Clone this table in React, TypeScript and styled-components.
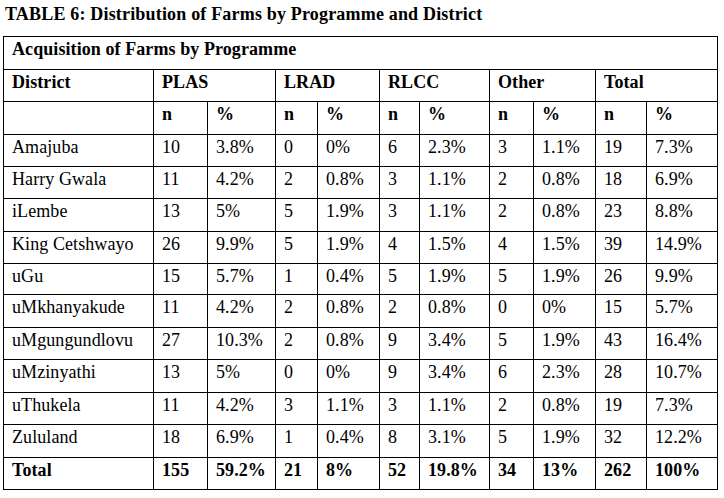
import React from "react";
import styled, { createGlobalStyle } from "styled-components";

const Global = createGlobalStyle`
  html, body { margin: 0; padding: 0; background: #fff; }
  body { font-family: "Liberation Serif", "Times New Roman", serif; color: #000; }
`;

const Page = styled.div`
  padding: 4px 0 0 3px;
  width: 724px;
  box-sizing: border-box;
`;

const Caption = styled.div`
  font-weight: bold;
  font-size: 18px;
  letter-spacing: 0.18px;
  line-height: 21px;
  padding-left: 2px;
  height: 32px;
`;

const Table = styled.table`
  border-collapse: collapse;
  table-layout: fixed;
  width: 714px;
  font-size: 18px;
`;

const Row = styled.tr<{ $h: number }>`
  height: ${(p) => p.$h}px;
`;

const Cell = styled.td<{ $bold?: boolean }>`
  border: 1px solid #000;
  padding: 2px 4px 0 8px;
  vertical-align: top;
  text-align: left;
  line-height: 21px;
  letter-spacing: 0.08px;
  font-weight: ${(p) => (p.$bold ? "bold" : "normal")};
  white-space: nowrap;
  overflow: hidden;
`;

const widths = [150, 54, 68, 42, 62, 40, 70, 44, 62, 51, 71];
const heights = [33, 32, 33, 32, 32, 33, 32, 31, 33, 32, 33, 32, 33, 32];

const data: string[][] = [
  ["Amajuba", "10", "3.8%", "0", "0%", "6", "2.3%", "3", "1.1%", "19", "7.3%"],
  ["Harry Gwala", "11", "4.2%", "2", "0.8%", "3", "1.1%", "2", "0.8%", "18", "6.9%"],
  ["iLembe", "13", "5%", "5", "1.9%", "3", "1.1%", "2", "0.8%", "23", "8.8%"],
  ["King Cetshwayo", "26", "9.9%", "5", "1.9%", "4", "1.5%", "4", "1.5%", "39", "14.9%"],
  ["uGu", "15", "5.7%", "1", "0.4%", "5", "1.9%", "5", "1.9%", "26", "9.9%"],
  ["uMkhanyakude", "11", "4.2%", "2", "0.8%", "2", "0.8%", "0", "0%", "15", "5.7%"],
  ["uMgungundlovu", "27", "10.3%", "2", "0.8%", "9", "3.4%", "5", "1.9%", "43", "16.4%"],
  ["uMzinyathi", "13", "5%", "0", "0%", "9", "3.4%", "6", "2.3%", "28", "10.7%"],
  ["uThukela", "11", "4.2%", "3", "1.1%", "3", "1.1%", "2", "0.8%", "19", "7.3%"],
  ["Zululand", "18", "6.9%", "1", "0.4%", "8", "3.1%", "5", "1.9%", "32", "12.2%"],
];

const total = ["Total", "155", "59.2%", "21", "8%", "52", "19.8%", "34", "13%", "262", "100%"];
const programmes = ["PLAS", "LRAD", "RLCC", "Other", "Total"];

export default function App() {
  return (
    <Page>
      <Global />
      <Caption>TABLE 6: Distribution of Farms by Programme and District</Caption>
      <Table>
        <colgroup>
          {widths.map((w, i) => (
            <col key={i} style={{ width: w }} />
          ))}
        </colgroup>
        <tbody>
          <Row $h={heights[0]}>
            <Cell $bold colSpan={11}>Acquisition of Farms by Programme</Cell>
          </Row>
          <Row $h={heights[1]}>
            <Cell $bold>District</Cell>
            {programmes.map((p) => (
              <Cell $bold colSpan={2} key={p}>{p}</Cell>
            ))}
          </Row>
          <Row $h={heights[2]}>
            <Cell />
            {programmes.map((p) => (
              <React.Fragment key={p}>
                <Cell $bold>n</Cell>
                <Cell $bold>%</Cell>
              </React.Fragment>
            ))}
          </Row>
          {data.map((r, i) => (
            <Row $h={heights[3 + i]} key={r[0]}>
              {r.map((v, j) => (
                <Cell key={j}>{v}</Cell>
              ))}
            </Row>
          ))}
          <Row $h={heights[13]}>
            {total.map((v, j) => (
              <Cell $bold key={j}>{v}</Cell>
            ))}
          </Row>
        </tbody>
      </Table>
    </Page>
  );
}
